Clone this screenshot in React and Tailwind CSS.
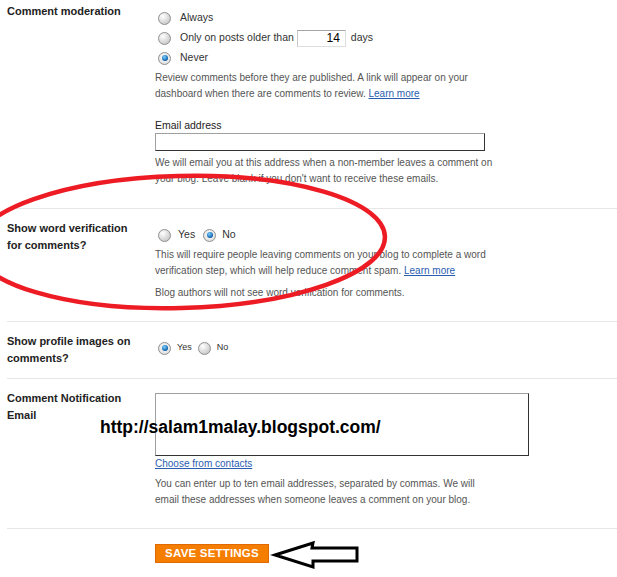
import React from 'react';

const FONT = "font-['Tahoma','Liberation_Sans',sans-serif]";

const Radio = ({ checked }) => (
  <span
    className={`inline-block w-[13px] h-[13px] rounded-full border border-[#8e8f8f] shrink-0 relative ${
      checked ? 'bg-[radial-gradient(circle_at_50%_40%,#ffffff,#d6d6d6)]' : 'bg-[radial-gradient(circle_at_35%_30%,#ffffff,#cfcfcf_70%,#bdbdbd)]'
    }`}
  >
    {checked && (
      <span className="absolute left-[2.5px] top-[2.5px] w-[6px] h-[6px] rounded-full bg-[radial-gradient(circle_at_40%_35%,#7fd0ff,#0a5ea8_70%,#063c6e)]" />
    )}
  </span>
);

const Label = ({ children }) => (
  <div className="w-[148px] shrink-0 text-[11px] font-bold text-[#222] leading-[17px]">{children}</div>
);

const Link = ({ children }) => (
  <a href="#" className="text-[#2a5db0] underline">{children}</a>
);

export default function App() {
  return (
    <div className={`relative w-[617px] h-[577px] bg-white overflow-hidden ${FONT} text-[10px] text-[#333]`}>
      <div className="pl-[7px]">
        {/* Comment moderation */}
        <div className="flex border-b border-[#e6e6e6] pt-[3px] pb-[21px]">
          <Label>Comment moderation</Label>
          <div className="flex-1">
            <div className="pt-[5px] text-[10.5px]">
              <div className="flex items-center h-[20px] gap-[9px] pl-[3px]">
                <Radio />
                <span>Always</span>
              </div>
              <div className="flex items-center h-[20px] gap-[9px] pl-[3px]">
                <Radio />
                <span>Only on posts older than</span>
                <div className="w-[49px] h-[17px] border border-t-[#a5a5a5] border-l-[#c8c8c8] border-r-[#dedede] border-b-[#dedede] text-right pr-[5px] text-[12px] leading-[15px] text-black -ml-[6px]">
                  14
                </div>
                <span className="-ml-[4px]">days</span>
              </div>
              <div className="flex items-center h-[20px] gap-[9px] pl-[3px]">
                <Radio checked />
                <span>Never</span>
              </div>
            </div>
            <p className="mt-[2px] leading-[16px] text-[#555]">
              Review comments before they are published. A link will appear on your<br />
              dashboard when there are comments to review. <Link>Learn more</Link>
            </p>
            <div className="mt-[15px] leading-[16px] text-[#222] text-[10.5px]">Email address</div>
            <div className="w-[330px] h-[18px] border border-t-[#a0a0a0] border-l-[#a0a0a0] border-r-[#333] border-b-[#333]" />
            <p className="mt-[4px] leading-[16px] text-[#555]">
              We will email you at this address when a non-member leaves a comment on<br />
              your blog. Leave blank if you don't want to receive these emails.
            </p>
          </div>
        </div>

        {/* Word verification */}
        <div className="flex border-b border-[#e6e6e6] pt-[11px] pb-[20px]">
          <Label>
            Show word verification<br />for comments?
          </Label>
          <div className="flex-1">
            <div className="flex items-center h-[16px] mt-[7px] pl-[3px] gap-[8px] text-[10.5px]">
              <Radio />
              <span className="-ml-[1px]">Yes</span>
              <Radio checked />
              <span className="-ml-[2px]">No</span>
            </div>
            <p className="mt-[4px] leading-[16px] text-[#555]">
              This will require people leaving comments on your blog to complete a word<br />
              verification step, which will help reduce comment spam. <Link>Learn more</Link>
            </p>
            <p className="mt-[6px] leading-[16px] text-[#555]">
              Blog authors will not see word verification for comments.
            </p>
          </div>
        </div>

        {/* Profile images */}
        <div className="flex border-b border-[#e6e6e6] pt-[11px] pb-[11px]">
          <Label>
            Show profile images on<br />comments?
          </Label>
          <div className="flex-1">
            <div className="flex items-center h-[16px] mt-[7px] pl-[3px] gap-[6px] text-[9px]">
              <Radio checked />
              <span>Yes</span>
              <Radio />
              <span>No</span>
            </div>
          </div>
        </div>

        {/* Comment notification */}
        <div className="flex border-b border-[#e6e6e6] pt-[11px] pb-[20px]">
          <Label>
            Comment Notification<br />Email
          </Label>
          <div className="flex-1 pt-[3px]">
            <div className="w-[374px] h-[63px] border border-t-[#a0a0a0] border-l-[#a0a0a0] border-r-[#333] border-b-[#333]" />
            <div className="leading-[16px]">
              <Link>Choose from contacts</Link>
            </div>
            <p className="mt-[4px] leading-[16px] text-[#555]">
              You can enter up to ten email addresses, separated by commas. We will<br />
              email these addresses when someone leaves a comment on your blog.
            </p>
          </div>
        </div>

        {/* Save */}
        <div className="flex pt-[15px] pl-[148px]">
          <button className="h-[19px] w-[114px] bg-[#f57d00] border border-[#e06a00] text-white font-bold text-[11.5px] leading-[17px] tracking-[0.2px]">
            SAVE SETTINGS
          </button>
        </div>
      </div>

      {/* annotations */}
      <svg className="absolute left-0 top-0 pointer-events-none" width="617" height="577">
        <ellipse cx="180" cy="242" rx="205" ry="66" fill="none" stroke="#ed1c24" strokeWidth="4.5" transform="rotate(-1.5 180 242)" />
        <polygon
          points="275,555 313,543 312,548 357,548 357,561 313,561 313,567"
          fill="none"
          stroke="#000"
          strokeWidth="3"
          strokeLinejoin="miter"
        />
      </svg>
      <div className="absolute left-[100px] top-[415px] text-[17.5px] font-bold text-black leading-[24px] font-['Liberation_Sans',sans-serif]">
        http://salam1malay.blogspot.com/
      </div>
    </div>
  );
}
